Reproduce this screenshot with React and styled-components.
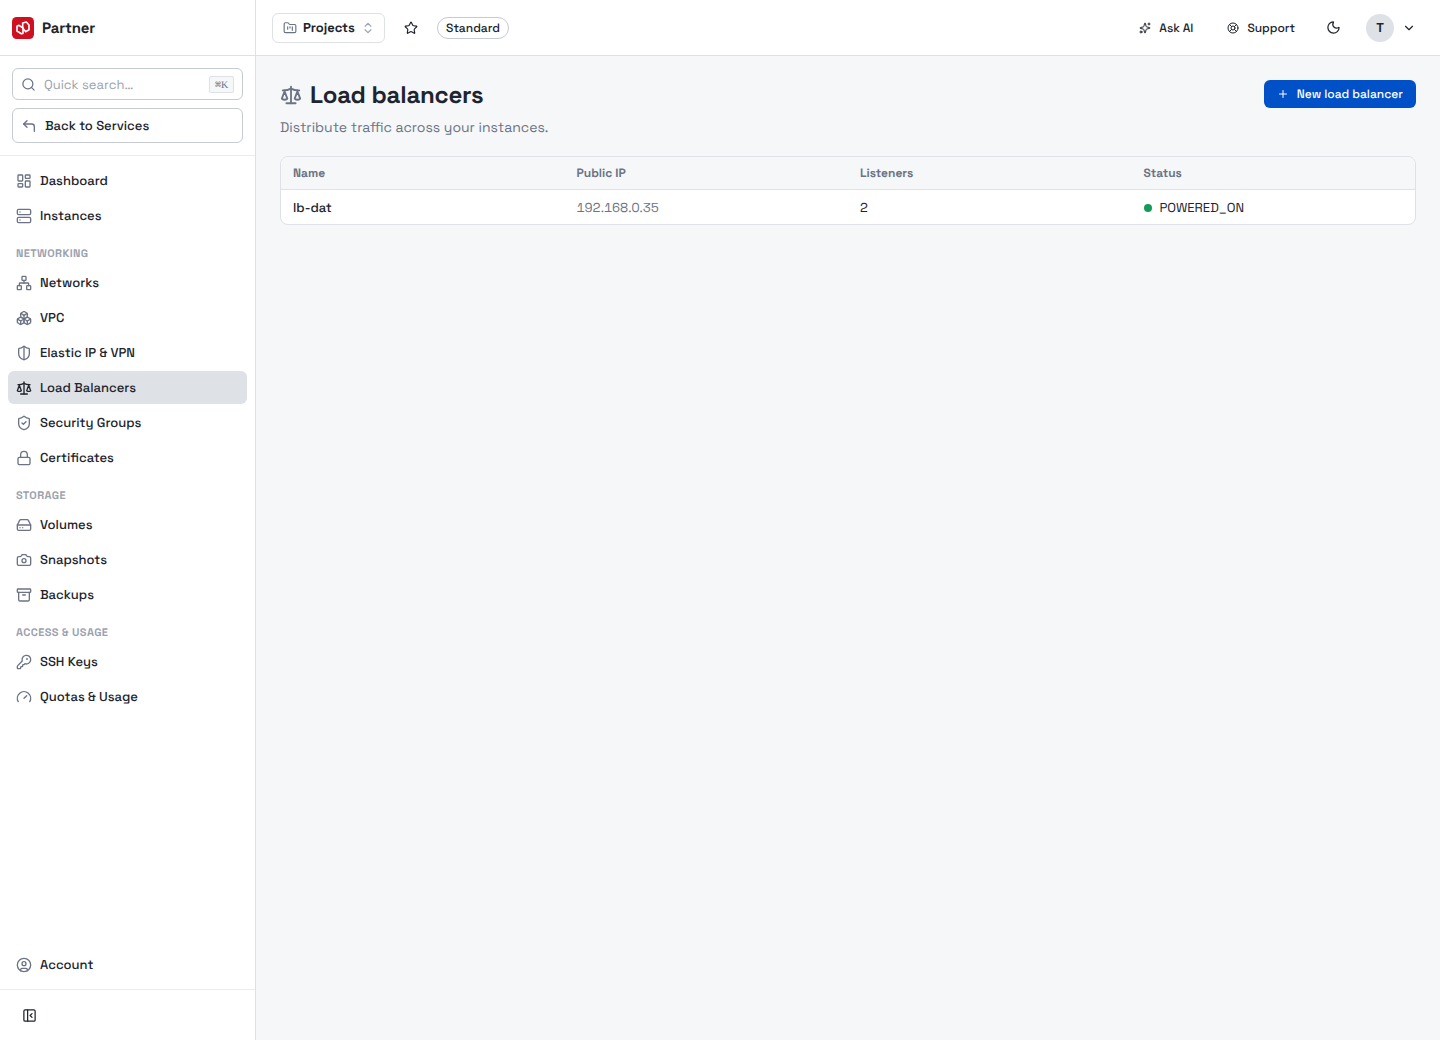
import React from 'react';
import styled, { createGlobalStyle } from 'styled-components';
import {
  Archive,
  Boxes,
  Camera,
  ChevronDown,
  ChevronsUpDown,
  CircleUser,
  CornerUpLeft,
  FolderKanban,
  Gauge,
  HardDrive,
  KeyRound,
  LayoutDashboard,
  LifeBuoy,
  Lock,
  Moon,
  Network,
  PanelLeftClose,
  Plus,
  Scale,
  Search,
  Server,
  ShieldCheck,
  ShieldHalf,
  Sparkles,
  Star,
} from 'lucide-react';

const navGroups = [
  {
    items: [
      { label: 'Dashboard', icon: LayoutDashboard },
      { label: 'Instances', icon: Server },
    ],
  },
  {
    title: 'Networking',
    items: [
      { label: 'Networks', icon: Network },
      { label: 'VPC', icon: Boxes },
      { label: 'Elastic IP & VPN', icon: ShieldHalf },
      { label: 'Load Balancers', icon: Scale, active: true },
      { label: 'Security Groups', icon: ShieldCheck },
      { label: 'Certificates', icon: Lock },
    ],
  },
  {
    title: 'Storage',
    items: [
      { label: 'Volumes', icon: HardDrive },
      { label: 'Snapshots', icon: Camera },
      { label: 'Backups', icon: Archive },
    ],
  },
  {
    title: 'Access & Usage',
    items: [
      { label: 'SSH Keys', icon: KeyRound },
      { label: 'Quotas & Usage', icon: Gauge },
    ],
  },
];

const balancers = [{ name: 'lb-dat', ip: '192.168.0.35', listeners: 2, status: 'POWERED_ON' }];

const NavItem = ({ label, icon: Icon, active }) => (
  <NavLink href="#" $active={active}>
    <Icon size={16} />
    <span>{label}</span>
  </NavLink>
);

const Logo = () => (
  <LogoMark viewBox="0 0 66 66">
    <rect width="66" height="66" rx="14" fill="#cf1020" />
    <g fill="none" stroke="#fff" strokeWidth="5" strokeLinejoin="round">
      <path d="M15 28L21 25L33 33V49L28 50L15 42Z" />
      <path d="M32 18V33L41 44L51 38V24L43 15Z" />
    </g>
  </LogoMark>
);

const App = () => {
  return (
    <Shell>
      <GlobalStyle />
      <Sidebar>
        <Brand>
          <Logo />
          <span>Partner</span>
        </Brand>
        <SidebarTools>
          <SearchBox>
            <Search size={15} />
            <span>Quick search…</span>
            <kbd>⌘K</kbd>
          </SearchBox>
          <BackButton>
            <CornerUpLeft size={16} />
            <span>Back to Services</span>
          </BackButton>
        </SidebarTools>
        <Nav>
          {navGroups.map((group, i) => (
            <React.Fragment key={i}>
              {group.title && <GroupTitle>{group.title}</GroupTitle>}
              {group.items.map((item) => (
                <NavItem key={item.label} {...item} />
              ))}
            </React.Fragment>
          ))}
        </Nav>
        <AccountArea>
          <NavItem label="Account" icon={CircleUser} />
        </AccountArea>
        <SidebarFooter>
          <PanelLeftClose size={15} />
        </SidebarFooter>
      </Sidebar>
      <Main>
        <TopBar>
          <ProjectPicker>
            <FolderKanban size={14} />
            <span>Projects</span>
            <ChevronsUpDown size={14} />
          </ProjectPicker>
          <StarButton>
            <Star size={14} />
          </StarButton>
          <Badge>Standard</Badge>
          <TopActions>
            <TextAction>
              <Sparkles size={12} />
              Ask AI
            </TextAction>
            <TextAction>
              <LifeBuoy size={12} />
              Support
            </TextAction>
            <IconAction>
              <Moon size={15} />
            </IconAction>
            <UserMenu>
              <Avatar>T</Avatar>
              <ChevronDown size={14} />
            </UserMenu>
          </TopActions>
        </TopBar>
        <Content>
          <PageHeader>
            <PageTitle>
              <Scale size={22} />
              <h1>Load balancers</h1>
            </PageTitle>
            <PrimaryButton>
              <Plus size={12} />
              <span>New load balancer</span>
            </PrimaryButton>
          </PageHeader>
          <Subtitle>Distribute traffic across your instances.</Subtitle>
          <Table>
            <HeadRow>
              <span>Name</span>
              <span>Public IP</span>
              <span>Listeners</span>
              <span>Status</span>
            </HeadRow>
            {balancers.map((lb) => (
              <Row key={lb.name}>
                <Name>{lb.name}</Name>
                <Address>{lb.ip}</Address>
                <span>{lb.listeners}</span>
                <Status>{lb.status}</Status>
              </Row>
            ))}
          </Table>
        </Content>
      </Main>
    </Shell>
  );
};

const GlobalStyle = createGlobalStyle`
  * {
    box-sizing: border-box;
  }
  body {
    margin: 0;
    background: #f5f7f9;
    color: #20242d;
    font-family: 'Space Grotesk', Inter, sans-serif;
    font-size: 13px;
    text-rendering: geometricPrecision;
  }
  button {
    margin: 0;
    font-family: inherit;
    color: inherit;
    text-rendering: inherit;
  }
  svg {
    flex-shrink: 0;
  }
`;

const Shell = styled.div`
  display: flex;
  height: 100vh;
`;

const Sidebar = styled.aside`
  display: flex;
  flex-direction: column;
  width: 256px;
  flex-shrink: 0;
  background: white;
  border-right: 1px solid #dee1e6;
`;

const Brand = styled.div`
  display: flex;
  align-items: center;
  gap: 8px;
  height: 56px;
  padding: 0 12px;
  border-bottom: 1px solid #dee1e6;
  font-size: 15px;
  font-weight: 600;
  letter-spacing: -0.01em;
  span {
    padding-top: 1px;
  }
`;

const LogoMark = styled.svg`
  width: 22px;
  height: 22px;
`;

const SidebarTools = styled.div`
  display: flex;
  flex-direction: column;
  gap: 8px;
  padding: 12px;
  border-bottom: 1px solid #e9ebee;
`;

const SearchBox = styled.div`
  display: flex;
  align-items: center;
  gap: 8px;
  height: 32px;
  padding: 0 8px;
  border: 1px solid #c5cad3;
  border-radius: 6px;
  color: #9ba2af;
  svg {
    color: #6b7384;
  }
  kbd {
    width: 25px;
    margin-left: auto;
    height: 17px;
    border: 1px solid #dee1e6;
    border-radius: 2px;
    background: #f5f7f9;
    color: #6b7384;
    font-family: 'Liberation Serif', 'DejaVu Sans Mono', serif;
    font-size: 10px;
    line-height: 17px;
    text-align: center;
  }
`;

const BackButton = styled.button`
  display: flex;
  align-items: center;
  gap: 8px;
  height: 35px;
  padding: 0 8px;
  border: 1px solid #c5cad3;
  border-radius: 6px;
  background: white;
  font-size: 13px;
  font-weight: 500;
  svg {
    color: #6b7384;
  }
`;

const Nav = styled.nav`
  display: flex;
  flex-direction: column;
  gap: 2px;
  flex: 1;
  padding: 8px;
`;

const NavLink = styled.a`
  display: flex;
  align-items: center;
  gap: 8px;
  height: 33px;
  padding: 0 8px;
  border-radius: 6px;
  background: ${(props) => (props.$active ? '#dee1e6' : 'transparent')};
  color: #20242d;
  font-weight: 500;
  text-decoration: none;
  svg {
    color: ${(props) => (props.$active ? '#20242d' : '#6b7384')};
  }
`;

const GroupTitle = styled.h2`
  margin: 0;
  height: 30px;
  padding: 13px 8px 0;
  color: #9ba2af;
  font-size: 11px;
  font-weight: 600;
  line-height: 15px;
  letter-spacing: 0.035em;
  text-transform: uppercase;
`;

const AccountArea = styled.div`
  padding: 8px;
`;

const SidebarFooter = styled.div`
  display: flex;
  align-items: center;
  height: 51px;
  padding: 0 22px;
  border-top: 1px solid #e9ebee;
`;

const Main = styled.main`
  flex: 1;
  min-width: 0;
`;

const TopBar = styled.header`
  display: flex;
  align-items: center;
  height: 56px;
  padding: 0 24px 0 16px;
  background: white;
  border-bottom: 1px solid #dee1e6;
`;

const ProjectPicker = styled.button`
  display: flex;
  align-items: center;
  gap: 6px;
  width: 113px;
  height: 30px;
  padding: 0 10px;
  border: 1px solid #dee1e6;
  border-radius: 6px;
  background: white;
  font-size: 13px;
  font-weight: 600;
  svg {
    color: #6b7384;
  }
  svg:last-child {
    color: #9ba2af;
  }
`;

const StarButton = styled.button`
  display: grid;
  place-items: center;
  width: 28px;
  height: 28px;
  margin: 0 12px;
  padding: 0;
  border: 0;
  background: none;
`;

const Badge = styled.span`
  display: grid;
  place-items: center;
  width: 72px;
  height: 22px;
  border: 1px solid #c5cad3;
  border-radius: 11px;
  font-size: 12px;
  font-weight: 500;
`;

const TopActions = styled.div`
  display: flex;
  align-items: center;
  margin-left: auto;
`;

const TextAction = styled.button`
  display: flex;
  align-items: center;
  gap: 8px;
  margin-right: 34px;
  padding: 0;
  border: 0;
  background: none;
  font-size: 12px;
  font-weight: 500;
`;

const IconAction = styled(TextAction)`
  margin: 0 25px 0 -3px;
`;

const UserMenu = styled.div`
  display: flex;
  align-items: center;
  gap: 8px;
`;

const Avatar = styled.span`
  display: grid;
  place-items: center;
  width: 28px;
  height: 28px;
  border-radius: 50%;
  background: #dee1e6;
  font-size: 13px;
  font-weight: 600;
`;

const Content = styled.section`
  padding: 24px;
`;

const PageHeader = styled.div`
  display: flex;
  justify-content: space-between;
  align-items: flex-start;
`;

const PageTitle = styled.div`
  display: flex;
  align-items: center;
  gap: 8px;
  height: 30px;
  h1 {
    margin: 0;
    padding-top: 2px;
    font-size: 24px;
    font-weight: 600;
    line-height: 30px;
    letter-spacing: -0.01em;
  }
  svg {
    color: #6b7384;
  }
`;

const PrimaryButton = styled.button`
  display: flex;
  align-items: center;
  gap: 8px;
  height: 28px;
  padding: 0 13px;
  border: 0;
  border-radius: 6px;
  background: #0050c8;
  color: white;
  font-size: 12px;
  font-weight: 500;
  white-space: nowrap;
`;

const Subtitle = styled.p`
  margin: 8px 0 17px;
  color: #6b7384;
  font-size: 14px;
  line-height: 21px;
`;

const Table = styled.div`
  border: 1px solid #dee1e6;
  border-radius: 8px;
  background: white;
  overflow: hidden;
`;

const Row = styled.div`
  display: grid;
  grid-template-columns: repeat(4, 1fr);
  align-items: center;
  height: 34px;
  > span {
    padding: 0 12px;
  }
`;

const HeadRow = styled(Row)`
  height: 33px;
  border-bottom: 1px solid #dee1e6;
  background: #f5f7f9;
  color: #6b7384;
  font-size: 12px;
  font-weight: 600;
`;

const Name = styled.span`
  font-weight: 500;
`;

const Address = styled.span`
  color: #6b7384;
  font-variant-numeric: tabular-nums;
`;

const Status = styled.span`
  display: flex;
  align-items: center;
  gap: 8px;
  &::before {
    content: '';
    width: 8px;
    height: 8px;
    margin-top: 1px;
    border-radius: 50%;
    background: #16995a;
  }
`;

export default App;
